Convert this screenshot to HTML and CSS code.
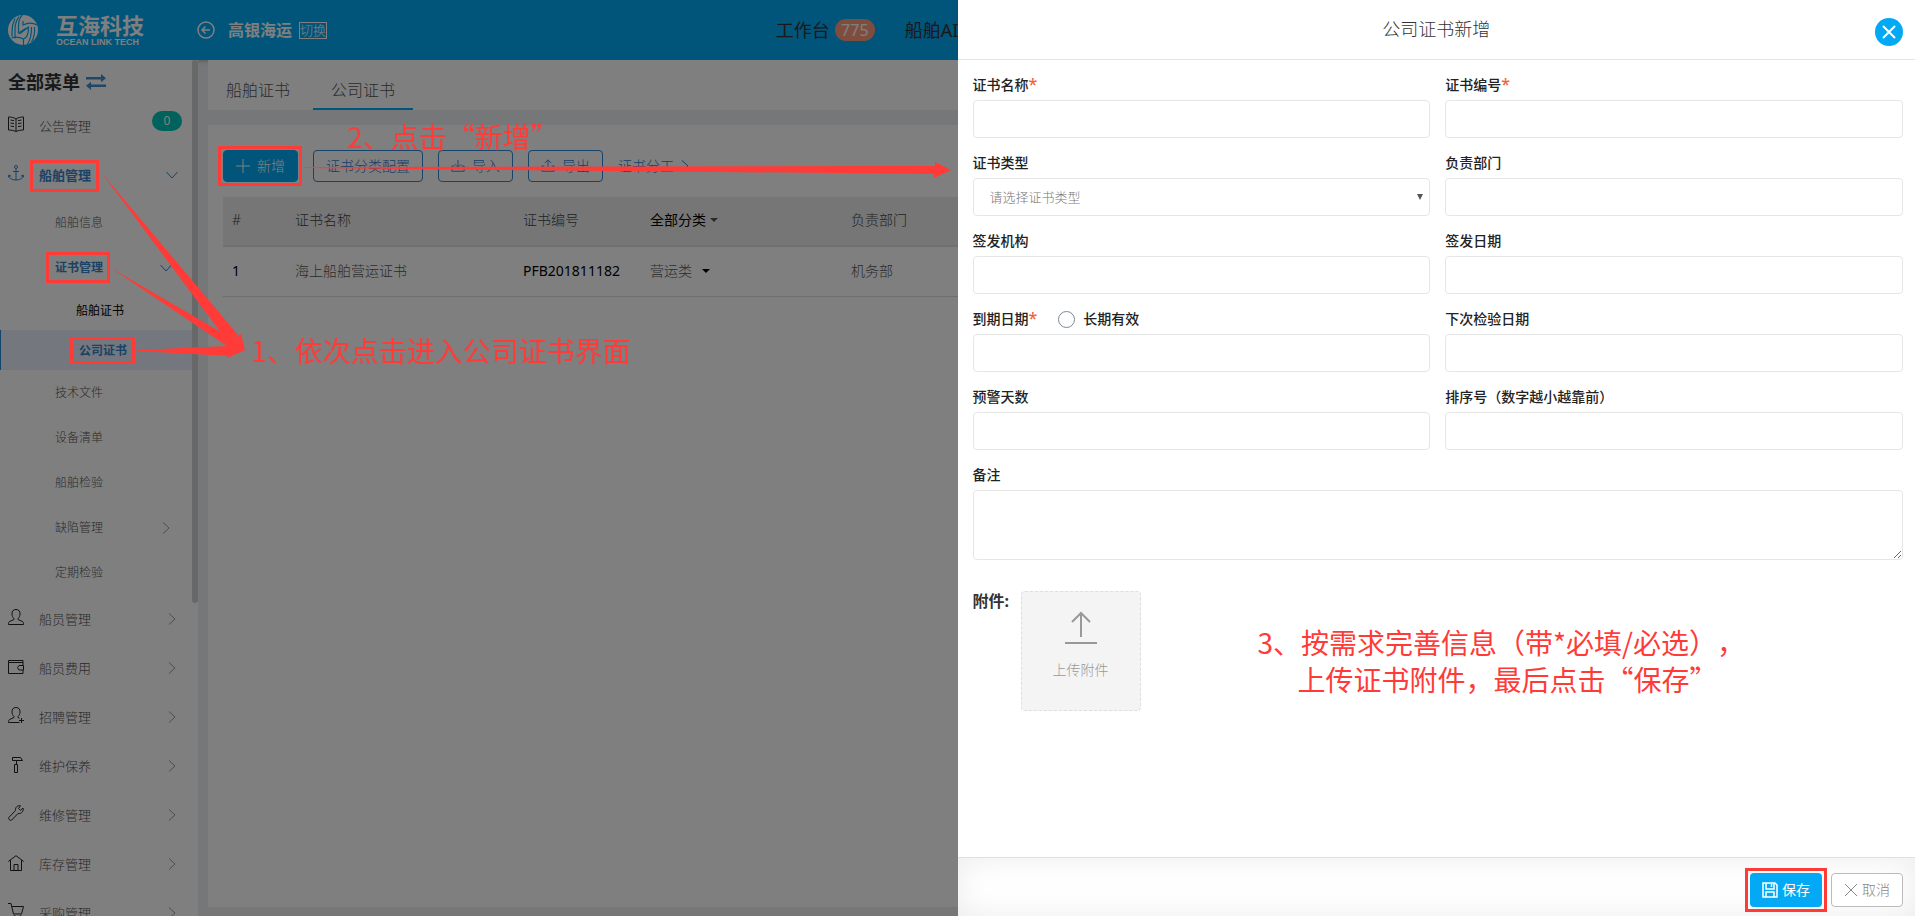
FILE: index.html
```html
<!DOCTYPE html>
<html lang="zh-CN">
<head>
<meta charset="utf-8">
<title>公司证书新增</title>
<link rel="stylesheet" href="styles.css">
</head>
<body>
<svg class="sprite" aria-hidden="true">
  <symbol id="right" viewBox="0 0 16 16"><path d="M5 2.500l6 5.500-6 5.500"/></symbol>
  <symbol id="down" viewBox="0 0 16 16"><path d="M2.500 5l5.500 6 5.500-6"/></symbol>
</svg>

<div class="app">
  <header class="topbar">
    <div class="brand">
      <svg class="brand-mark" viewBox="0 0 30 30" aria-hidden="true">
        <circle cx="15" cy="15" r="15" fill="#fff"/>
        <g fill="none" stroke="#03a9f4" stroke-width="1.200">
          <path d="M14.500 0c-3 2-4 6-4 12v6l8-5M11 1.500c-3 4-4 8-4 13v9M7 3.500c-2 4-3 8-3 13v5"/>
          <path d="M15 6v4c4-2 9-3 14 0M15.500 30v-6c3.500-1 5-5 5-12l-9 7M19.500 29c3-4 4-9 4-17M23.500 27c2.500-4 3.500-9 3-15M3.500 23c4-1.500 8-1 12 1"/>
        </g>
      </svg>
      <div class="brand-text">
        <span class="brand-cn">互海科技</span>
        <span class="brand-en">OCEAN LINK TECH</span>
      </div>
    </div>
    <div class="company">
      <svg class="back" viewBox="0 0 18 18" aria-hidden="true"><circle cx="9" cy="9" r="8"/><path d="M13 9H5.500M8.500 5.500L5 9l3.500 3.500"/></svg>
      <strong>高银海运</strong>
      <button class="switch" type="button">切换</button>
    </div>
    <nav class="topnav">
      <a href="#">工作台 <span class="count">775</span></a>
      <a href="#">船舶AI</a>
    </nav>
  </header>

  <div class="workspace">
    <div class="side">
    <aside class="sidebar">
      <h2 class="menu-title">全部菜单
        <svg viewBox="0 0 20 16" aria-hidden="true"><path d="M0 3h15V0l5 4.200-5 4V5.500H0zM20 10.500H5V7.800l-5 4 5 4.200v-3h15z"/></svg>
      </h2>
      <ul class="menu">
        <li><a class="item" href="#"><svg class="ico" viewBox="0 0 16 16"><path d="M8 3C6 1.500 3 1 .5 1v13c2.500 0 5.500.5 7.500 1.500 2-1 5-1.500 7.500-1.500V1C13 1 10 1.500 8 3zv12.500M2.500 4l3.500.7M2.500 7l3.500.7M2.500 10l3.500.7M13.500 4l-3.500.7M13.500 7l-3.500.7M13.500 10l-3.500.7"/></svg><span>公告管理</span><b class="pill">0</b></a></li>
        <li><a class="item open" href="#"><svg class="ico" viewBox="0 0 16 16"><circle cx="8" cy="2" r="1.500"/><path d="M8 3.500V15M5 6.500h6M.8 10.500C1.500 13.500 4 15 8 15s6.500-1.500 7.200-4.500M.3 12.500l.5-2.500 2.400 1.200M15.700 12.500l-.5-2.500-2.400 1.200"/></svg><span>船舶管理</span><svg class="chev"><use href="#down"/></svg></a></li>
        <li><a class="sub" href="#"><span>船舶信息</span></a></li>
        <li><a class="sub open" href="#"><span>证书管理</span><svg class="chev"><use href="#down"/></svg></a></li>
        <li><a class="leaf" href="#">船舶证书</a></li>
        <li><a class="leaf current" href="#">公司证书</a></li>
        <li><a class="sub" href="#"><span>技术文件</span></a></li>
        <li><a class="sub" href="#"><span>设备清单</span></a></li>
        <li><a class="sub" href="#"><span>船舶检验</span></a></li>
        <li><a class="sub" href="#"><span>缺陷管理</span><svg class="chev"><use href="#right"/></svg></a></li>
        <li><a class="sub" href="#"><span>定期检验</span></a></li>
        <li><a class="item" href="#"><svg class="ico" viewBox="0 0 16 16"><path d="M8 .5C5 .5 3.800 2.500 4 5c.1 2 .8 3.500 2 4.500v1L1.500 12.500C.7 13 .5 14 .5 15.500h15c0-1.500-.2-2.500-1-3L10 10.500v-1c1.200-1 1.900-2.500 2-4.500.2-2.500-1-4.500-4-4.500z"/></svg><span>船员管理</span><svg class="chev"><use href="#right"/></svg></a></li>
        <li><a class="item" href="#"><svg class="ico low" viewBox="0 0 16 16"><path d="M15 6V3.500H.5v11H15V11M.5 3.500v-2h14.500v2M15.500 6.500H11l-1.500 2.200L11 11h4.500z"/></svg><span>船员费用</span><svg class="chev"><use href="#right"/></svg></a></li>
        <li><a class="item" href="#"><svg class="ico" viewBox="0 0 16 16"><path d="M11.500 15.500H.5c0-1.500.2-2.500 1-3L6 10.500v-1C4.800 8.500 4.100 7 4 5 3.800 2.500 5 .5 8 .5s4.200 2 4 4.500c-.1 2-.8 3.500-2 4.500v1l1.500.8M13.500 11v5M11 13.500h5"/></svg><span>招聘管理</span><svg class="chev"><use href="#right"/></svg></a></li>
        <li><a class="item" href="#"><svg class="ico low" viewBox="0 0 16 16"><path d="M4.500.5h8l2 3h-10zM8.500 3.500v4M6.500 7.500h3v8h-3z"/></svg><span>维护保养</span><svg class="chev"><use href="#right"/></svg></a></li>
        <li><a class="item" href="#"><svg class="ico" viewBox="0 0 16 16"><path d="M12.500.8C10 0 7 2 7.500 5.500L.8 12.500c-.8 1.500 1.200 3.500 2.700 2.700l6.500-6.700c3.500.5 6-2.500 5-5.500l-2.500 2.300-2-1.800z"/></svg><span>维修管理</span><svg class="chev"><use href="#right"/></svg></a></li>
        <li><a class="item" href="#"><svg class="ico low" viewBox="0 0 16 16"><path d="M.3 6.500L8 .7l7.700 5.800M2.500 5v10.500h11V5M6 15.500V9.500h4v6"/></svg><span>库存管理</span><svg class="chev"><use href="#right"/></svg></a></li>
        <li><a class="item" href="#"><svg class="ico" viewBox="0 0 16 16"><path d="M0 .5h3l2.500 10.500h8l2-7.500H4"/><circle cx="6.500" cy="14" r="1.300"/><circle cx="12.500" cy="14" r="1.300"/></svg><span>采购管理</span><svg class="chev"><use href="#right"/></svg></a></li>
      </ul>
    </aside>
    <div class="scrollbar"></div>
    </div>

    <main class="content">
      <nav class="tabs">
        <a href="#">船舶证书</a>
        <a class="active" href="#">公司证书</a>
      </nav>
      <section class="card">
        <div class="toolbar">
          <button class="btn primary" type="button"><svg viewBox="0 0 14 14"><path d="M7 0v14M0 7h14"/></svg>新增</button>
          <button class="btn" type="button">证书分类配置</button>
          <button class="btn" type="button"><svg viewBox="0 0 16 16"><path d="M8 1v8M4.500 6L8 9.500 11.500 6M4 8H1v6h14V8h-3"/></svg>导入</button>
          <button class="btn" type="button"><svg viewBox="0 0 16 16"><path d="M8 10V1M4.500 4.500L8 1l3.500 3.500M4 8H1v6h14V8h-3"/></svg>导出</button>
          <a class="more" href="#">证书分工<svg class="chev"><use href="#right"/></svg></a>
        </div>
        <table class="grid">
          <colgroup><col class="c-no"><col class="c-name"><col class="c-code"><col class="c-kind"><col class="c-dept"></colgroup>
          <thead>
            <tr><th>#</th><th>证书名称</th><th>证书编号</th><th class="dark">全部分类<i class="caret"></i></th><th>负责部门</th></tr>
          </thead>
          <tbody>
            <tr><td class="dark">1</td><td>海上船舶营运证书</td><td class="dark">PFB201811182</td><td>营运类<i class="caret wide"></i></td><td>机务部</td></tr>
          </tbody>
        </table>
      </section>
    </main>
  </div>
</div>

<div class="mask"></div>

<section class="drawer" role="dialog" aria-labelledby="drawer-title">
  <header class="drawer-head">
    <h1 id="drawer-title">公司证书新增</h1>
    <button class="close" type="button" aria-label="关闭"><svg viewBox="0 0 14 14"><path d="M1 1l12 12M13 1L1 13"/></svg></button>
  </header>
  <form class="form">
    <div class="fields">
      <div class="field"><label for="f-name">证书名称<em>*</em></label><input id="f-name" type="text"></div>
      <div class="field"><label for="f-code">证书编号<em>*</em></label><input id="f-code" type="text"></div>
      <div class="field"><label for="f-kind">证书类型</label>
        <div class="select"><select id="f-kind"><option>请选择证书类型</option></select></div></div>
      <div class="field"><label for="f-dept">负责部门</label><input id="f-dept" type="text"></div>
      <div class="field"><label for="f-org">签发机构</label><input id="f-org" type="text"></div>
      <div class="field"><label for="f-issue">签发日期</label><input id="f-issue" type="text"></div>
      <div class="field">
        <div class="label-row"><label for="f-due">到期日期<em>*</em></label><input id="f-long" type="radio"><label for="f-long">长期有效</label></div>
        <input id="f-due" type="text"></div>
      <div class="field"><label for="f-next">下次检验日期</label><input id="f-next" type="text"></div>
      <div class="field"><label for="f-warn">预警天数</label><input id="f-warn" type="text"></div>
      <div class="field"><label for="f-sort">排序号（数字越小越靠前）</label><input id="f-sort" type="text"></div>
      <div class="field full"><label for="f-note">备注</label><textarea id="f-note"></textarea></div>
    </div>
    <div class="attach">
      <span class="attach-label">附件:</span>
      <button class="upload" type="button">
        <svg viewBox="0 0 34 34" aria-hidden="true"><path d="M17 27V3M8 12l9-9 9 9M1 33h32"/></svg>
        上传附件
      </button>
    </div>
    <p class="note note-3">3、按需求完善信息（带*必填/必选），<br><span>上传证书附件，最后点击“保存”</span></p>
  </form>
  <footer class="drawer-foot">
    <span class="marked"><button class="save" type="button"><svg viewBox="0 0 16 16"><path d="M1 1h12l2 2v12H1zM4 1v6h8V1M9.500 2v3M4 15v-5h8v5"/></svg>保存</button></span>
    <button class="cancel" type="button"><svg viewBox="0 0 14 14"><path d="M1 1l12 12M13 1L1 13"/></svg>取消</button>
  </footer>
</section>

<div class="guide">
  <svg class="guide-art" width="960" height="380" aria-hidden="true">
    <g fill="none" stroke="#ff3b38" stroke-width="3">
      <rect x="31.500" y="161.500" width="66" height="29"/>
      <rect x="47.500" y="253.500" width="61" height="28"/>
      <rect x="71.500" y="338.500" width="62" height="24"/>
      <rect x="219.500" y="147.500" width="81" height="37"/>
    </g>
    <g fill="#ff3b38">
      <path d="M101 172L238 335 228 342z"/>
      <path d="M111 268L231 338 227 346z"/>
      <path d="M137 350L229 346V356L137 351z"/>
      <path d="M241 334L245 350 227 358 227 344 225 343z"/>
      <path d="M305 167L935 166 935 162 951 170 934 178V174L305 168z"/>
    </g>
  </svg>
  <p class="note note-1">1、依次点击进入公司证书界面</p>
  <p class="note note-2">2、点击“新增”</p>
</div>
</body>
</html>
```
FILE: styles.css
```css
* { box-sizing: border-box; }
body {
  margin: 0;
  height: 100vh;
  overflow: hidden;
  font: 300 14px/20px "Noto Sans", "Noto Sans CJK SC", sans-serif;
  color: #555;
}
a { color: inherit; text-decoration: none; }
button, input, select, textarea { font: inherit; color: inherit; }
button { cursor: pointer; padding: 0; background: none; border: 0; }
svg { fill: none; stroke: currentColor; flex: none; }
h1, h2, p, ul { margin: 0; padding: 0; }
ul { list-style: none; }
.sprite { position: absolute; width: 0; height: 0; }

/* application shell */
.app { display: flex; flex-direction: column; height: 100vh; background: #ebeef3; }
.topbar {
  display: flex; align-items: center; flex: none;
  height: 60px; padding-left: 8px;
  background: #03a9f4; color: #fff;
  box-shadow: 0 1px 4px rgba(0, 0, 0, .25);
}
.brand { display: flex; align-items: center; gap: 18px; width: 189px; }
.brand-mark { width: 30px; height: 30px; stroke: none; }
.brand-text { display: flex; flex-direction: column; }
.brand-cn { font-size: 22px; line-height: 25px; font-weight: 700; }
.brand-en { font: 700 9px/9px "Liberation Sans", sans-serif; white-space: nowrap; }
.company { display: flex; align-items: center; gap: 7px; }
.company strong { font-size: 16px; font-weight: 700; }
.back { width: 18px; height: 18px; margin-right: 6px; stroke-width: 1.500; }
.switch { border: 1px solid #fff; font-size: 13px; line-height: 15px; }
.topnav { display: flex; gap: 30px; width: 60%; margin-left: auto; padding-left: 5px; color: #333; font-size: 18px; line-height: 24px; font-weight: 400; }
.topnav a { display: flex; align-items: center; gap: 5px; }
.count { padding: 0 6px; min-width: 40px; text-align: center; border-radius: 11px; background: #ff9b7c; color: #fff; font-size: 16px; line-height: 22px; }

.workspace { display: flex; flex: 1; min-height: 0; }
.side { display: flex; flex: none; background: #fff; }
.sidebar { width: 192px; flex: none; overflow: hidden; }
.scrollbar { width: 6px; height: 543px; flex: none; border-radius: 3px; background: #d0d0d0; }
.menu-title { display: flex; align-items: center; gap: 6px; height: 42px; padding: 2px 0 0 8px; font-size: 18px; font-weight: 700; color: #333; }
.menu-title svg { width: 20px; height: 16px; fill: #3e8ed0; stroke: none; }
.menu a { display: flex; align-items: center; }
.menu span { flex: 1; }
.item { height: 49px; padding: 0 12px 2px 8px; gap: 15px; font-size: 13px; }
.ico { width: 16px; height: 16px; margin-bottom: 4px; color: #222; }
.ico.low { margin-bottom: 1px; }
.chev { width: 16px; height: 16px; color: #999; }
.sub { height: 45px; padding: 0 18px 0 55px; font-size: 12px; }
.leaf { height: 40px; padding: 2px 0 0 76px; font-size: 12px; font-weight: 400; color: #000; }
.open, .open .ico, .open .chev { color: #3585cc; }
.open { font-weight: 700; }
.current { padding-left: 78px; border-left: 1px solid #2b88d8; background: #e8f0fd; color: #3585cc; font-weight: 700; }
.pill { width: 30px; height: 20px; margin: 0 -2px 10px 0; border-radius: 10px; background: #00c4b8; color: #fff; font-size: 12px; font-weight: 400; text-align: center; }

.content { display: flex; flex-direction: column; flex: 1; gap: 15px; min-width: 0; padding: 0 9px 9px 10px; }
.tabs { display: flex; gap: 5px; height: 50px; background: #fff; font-size: 16px; }
.tabs a { width: 100px; padding-top: 12px; line-height: 36px; text-align: center; border-bottom: 2px solid transparent; }
.tabs .active { border-color: #03a9f4; }
.card { flex: 1; padding: 25px 15px; background: #fff; }
.toolbar { display: flex; gap: 15px; height: 32px; margin-bottom: 15px; color: #2b7cd0; }
.btn { display: flex; align-items: center; justify-content: center; gap: 7px; min-width: 75px; padding: 0 12px; border: 1px solid #2b88d8; border-radius: 4px; }
.btn svg { width: 14px; height: 14px; }
.primary { background: #03a9f4; border-color: #03a9f4; color: #fff; }
.more { display: flex; align-items: center; gap: 3px; }
.more .chev { color: inherit; }
.grid { width: 100%; table-layout: fixed; border-collapse: collapse; }
.c-no { width: 63px; } .c-name { width: 228px; } .c-code { width: 127px; } .c-kind { width: 201px; }
.grid th, .grid td { height: 50px; padding: 0 0 0 9px; text-align: left; font-weight: 300; border-bottom: 1px solid #dcdcdc; }
.grid th { height: 49px; padding-bottom: 2px; background: #ededed; border-bottom: 2px solid #e0e0e0; color: #444; }
.grid .dark { color: #000; font-weight: 400; }
.caret { display: inline-block; margin-left: 4px; vertical-align: 3px; border: 4px solid transparent; border-top-color: #555; border-bottom: 0; }
.caret.wide { margin-left: 10px; border-top-color: #000; }

.mask { position: fixed; inset: 0; background: rgba(0, 0, 0, .5); }

/* drawer */
.drawer { position: fixed; top: 0; right: 0; bottom: 0; display: flex; flex-direction: column; width: 50%; background: #fff; }
.drawer-head { position: relative; flex: none; height: 60px; border-bottom: 1px solid #e4e4e4; text-align: center; }
.drawer-head h1 { font-size: 18px; line-height: 59px; font-weight: 300; color: #333; }
.close { position: absolute; top: 18px; right: 12px; width: 28px; height: 28px; border-radius: 50%; background: #03a9f4; color: #fff; }
.close svg { display: block; width: 14px; height: 14px; margin: auto; stroke-width: 2; }
.form { position: relative; flex: 1; min-height: 0; padding: 10px 12px 0 15px; }
.fields { display: grid; grid-template-columns: 1fr 1fr; gap: 10px 15px; }
.full { grid-column: 1 / -1; }
.field label { display: block; line-height: 30px; font-weight: 500; color: #222; }
.field em { color: #f0643c; font-style: normal; font-size: 16px; line-height: 20px; }
.field input[type="text"], .field select, .field textarea { display: block; width: 100%; height: 38px; border: 1px solid #e6e6e6; border-radius: 4px; background: #fff; outline: 0; }
.field textarea { height: 70px; resize: vertical; }
.select { position: relative; }
.field select { appearance: none; padding: 0 16px; font-size: 13px; color: #777; }
.select::after { content: ""; position: absolute; top: 16px; right: 7px; border: 3px solid transparent; border-top: 6px solid #555; border-bottom: 0; }
.label-row { display: flex; align-items: center; height: 30px; }
.label-row input { appearance: none; width: 17px; height: 17px; margin: 0 8px 0 21px; border: 1px solid #7d8790; border-radius: 50%; }
.attach { display: flex; gap: 10px; margin-top: 31px; }
.attach-label { width: 38px; font-size: 16px; font-weight: 700; color: #333; white-space: nowrap; }
.upload { display: flex; flex-direction: column; align-items: center; gap: 16px; width: 120px; height: 120px; padding-top: 18px; border: 1px dashed #dedede; border-radius: 4px; background: #f4f4f4; color: #999; }
.upload svg { width: 34px; height: 34px; stroke-width: 2; }
.drawer-foot { display: flex; align-items: center; justify-content: flex-end; gap: 4px; flex: none; height: 59px; padding: 6px 12px 0 0; border-top: 1px solid #e0e0e0; box-shadow: inset 0 0 32px rgba(0, 0, 0, .08); }
.marked { padding: 2px; border: 3px solid #ff3b38; }
.save, .cancel { display: flex; align-items: center; justify-content: center; gap: 4px; width: 72px; height: 34px; border-radius: 4px; }
.save { background: #03a9f4; color: #fff; font-weight: 400; }
.save svg { width: 16px; height: 16px; stroke-width: 1.500; }
.cancel { border: 1px solid #bbb; background: #fff; color: #888; }
.cancel svg { width: 14px; height: 14px; }

/* walkthrough notes */
.guide { position: absolute; inset: 0; pointer-events: none; }
.guide-art { position: absolute; top: 0; left: 0; stroke: none; }
.note { position: absolute; font: 400 28px/37px "Noto Sans CJK SC", sans-serif; color: #ff3b38; white-space: nowrap; text-spacing-trim: space-all; }
.note-1 { left: 251px; top: 332px; }
.note-2 { left: 347px; top: 118px; }
.note-3 { left: 300px; top: 564px; }
.note-3 span { padding-left: 40px; }
```
